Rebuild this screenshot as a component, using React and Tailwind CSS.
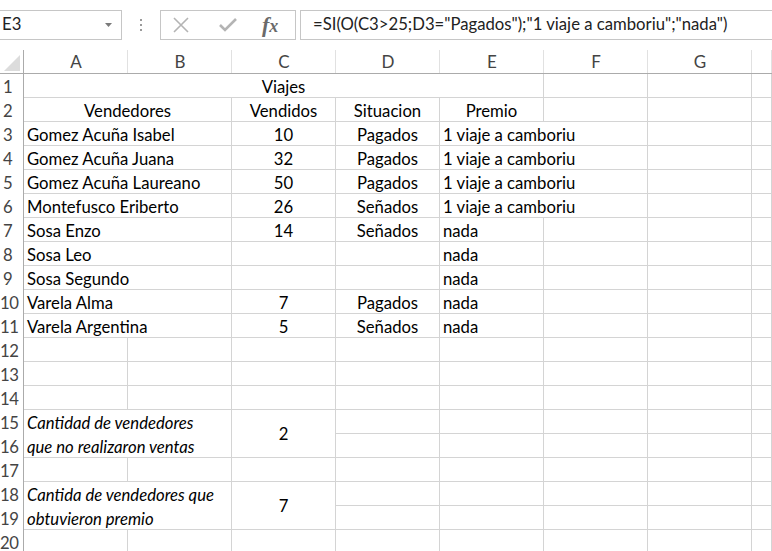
import React from "react";

const COLS = ["A", "B", "C", "D", "E", "F", "G", ""];

// each data row: [name, vendidos, situacion, premio]
const rows = [
  ["Gomez Acuña Isabel", "10", "Pagados", "1 viaje a camboriu"],
  ["Gomez Acuña Juana", "32", "Pagados", "1 viaje a camboriu"],
  ["Gomez Acuña Laureano", "50", "Pagados", "1 viaje a camboriu"],
  ["Montefusco Eriberto", "26", "Señados", "1 viaje a camboriu"],
  ["Sosa Enzo", "14", "Señados", "nada"],
  ["Sosa Leo", "", "", "nada"],
  ["Sosa Segundo", "", "", "nada"],
  ["Varela Alma", "7", "Pagados", "nada"],
  ["Varela Argentina", "5", "Señados", "nada"],
];

const line = "border-r border-b border-[#d4d4d4]";

function Cell({ className = "", children }) {
  return (
    <div className={`${line} flex items-end leading-[20px] overflow-visible whitespace-nowrap ${className}`}>
      {children}
    </div>
  );
}

function Empty({ className = "" }) {
  return <div className={`${line} ${className}`} />;
}

function RowNum({ n, span = "" }) {
  return (
    <div className={`border-r border-[#ababab] col-start-1 ${span}`}>
      {(Array.isArray(n) ? n : [n]).map((x) => (
        <div
          key={x}
          className={`h-[24px] flex items-end pb-[1px] leading-[20px] text-[#444] tracking-[-0.5px] ${x.length > 1 ? "pl-0" : "pl-[3px]"}`}
        >
          {x}
        </div>
      ))}
    </div>
  );
}

function Blank({ n }) {
  return (
    <>
      <RowNum n={String(n)} />
      <Empty />
      <Empty />
      <Empty />
      <Empty />
      <Empty />
      <Empty />
      <Empty />
      <Empty />
    </>
  );
}

function Summary({ nums, lines, value }) {
  return (
    <>
      <RowNum n={nums} span="row-span-2" />
      <div className={`${line} col-span-2 row-span-2 pl-[3px] italic leading-[24px] pt-[1px] whitespace-nowrap`}>
        {lines[0]}
        <br />
        {lines[1]}
      </div>
      <div className={`${line} row-span-2 flex items-center justify-center pt-[3px]`}>{value}</div>
      <Empty />
      <Empty />
      <Empty />
      <Empty />
      <Empty />
      <Empty className="col-start-5" />
      <Empty />
      <Empty />
      <Empty />
      <Empty />
    </>
  );
}

export default function App() {
  return (
    <div className="w-[772px] h-[551px] overflow-hidden bg-white text-[16.7px] text-black" style={{ fontFamily: "Lato, 'Open Sans', sans-serif" }}>
      {/* formula bar */}
      <div className="h-[50px] flex items-start pt-[10px]">
        <div className="w-[122px] h-[30px] border border-l-0 border-[#c6c6c6] flex items-center justify-between pl-[2px] pr-[9px] text-[#222]">
          <span>E3</span>
          <svg width="7" height="4" viewBox="0 0 7 4"><path d="M0 0h7L3.5 4z" fill="#7a7a7a" /></svg>
        </div>
        <div className="w-[38px] h-[30px] flex flex-col items-center justify-center gap-[3px]">
          <span className="w-[2px] h-[2px] bg-[#9a9a9a]" />
          <span className="w-[2px] h-[2px] bg-[#9a9a9a]" />
          <span className="w-[2px] h-[2px] bg-[#9a9a9a]" />
        </div>
        <div className="w-[136px] h-[30px] border border-[#c6c6c6] flex items-center">
          <svg className="ml-[12px]" width="16" height="16" viewBox="0 0 16 16">
            <path d="M1 1L15 15M15 1L1 15" stroke="#b4b4b4" strokeWidth="1.6" />
          </svg>
          <svg className="ml-[30px]" width="18" height="14" viewBox="0 0 18 14">
            <path d="M1 7l5 5L17 1" stroke="#b4b4b4" strokeWidth="2.6" fill="none" />
          </svg>
          <span className="ml-[25px] text-[#6a6a6a] text-[22px] font-bold italic leading-none" style={{ fontFamily: "'Liberation Serif', serif" }}>
            f<span className="text-[18px]">x</span>
          </span>
        </div>
        <div className="ml-[4px] flex-1 h-[30px] border border-r-0 border-[#c6c6c6] flex items-center pl-[12px] text-[#222]">
          =SI(O(C3&gt;25;D3="Pagados");"1 viaje a camboriu";"nada")
        </div>
      </div>

      {/* sheet */}
      <div className="grid grid-cols-[24px_repeat(7,104px)_1fr] auto-rows-[24px]">
        {/* column headers */}
        <div className="border-b border-r border-[#ababab] relative">
          <svg className="absolute left-[4px] top-[5px]" width="16" height="16" viewBox="0 0 16 16">
            <path d="M16 0V16H0z" fill="#dcdcdc" />
          </svg>
        </div>
        {COLS.map((c, i) => (
          <div key={i} className="border-b border-[#ababab] relative flex items-center justify-center text-[#444] text-[17px]">
            {c}
            <span className="absolute right-0 top-0 bottom-0 w-px bg-[#e1e1e1]" />
          </div>
        ))}

        {/* row 1 */}
        <RowNum n="1" />
        <Cell className="col-span-5 justify-center">Viajes</Cell>
        <Empty />
        <Empty />
        <Empty />

        {/* row 2 */}
        <RowNum n="2" />
        <Cell className="col-span-2 justify-center">Vendedores</Cell>
        <Cell className="justify-center">Vendidos</Cell>
        <Cell className="justify-center">Situacion</Cell>
        <Cell className="justify-center">Premio</Cell>
        <Empty />
        <Empty />
        <Empty />

        {rows.map((r, i) => {
          const long = r[3].length > 4;
          return (
            <React.Fragment key={i}>
              <RowNum n={String(i + 3)} />
              <Cell className="col-span-2 pl-[3px]">{r[0]}</Cell>
              <Cell className="justify-center">{r[1]}</Cell>
              <Cell className="justify-center">{r[2]}</Cell>
              <Cell className={`pl-[3px] ${long ? "border-r-0" : ""}`}>{r[3]}</Cell>
              <Empty />
              <Empty />
              <Empty />
            </React.Fragment>
          );
        })}

        <Blank n={12} />
        <Blank n={13} />
        <Blank n={14} />

        <Summary nums={["15", "16"]} lines={["Cantidad de vendedores", "que no realizaron ventas"]} value="2" />

        <Blank n={17} />

        <Summary nums={["18", "19"]} lines={["Cantida de vendedores que", "obtuvieron premio"]} value="7" />

        <Blank n={20} />
      </div>
    </div>
  );
}
